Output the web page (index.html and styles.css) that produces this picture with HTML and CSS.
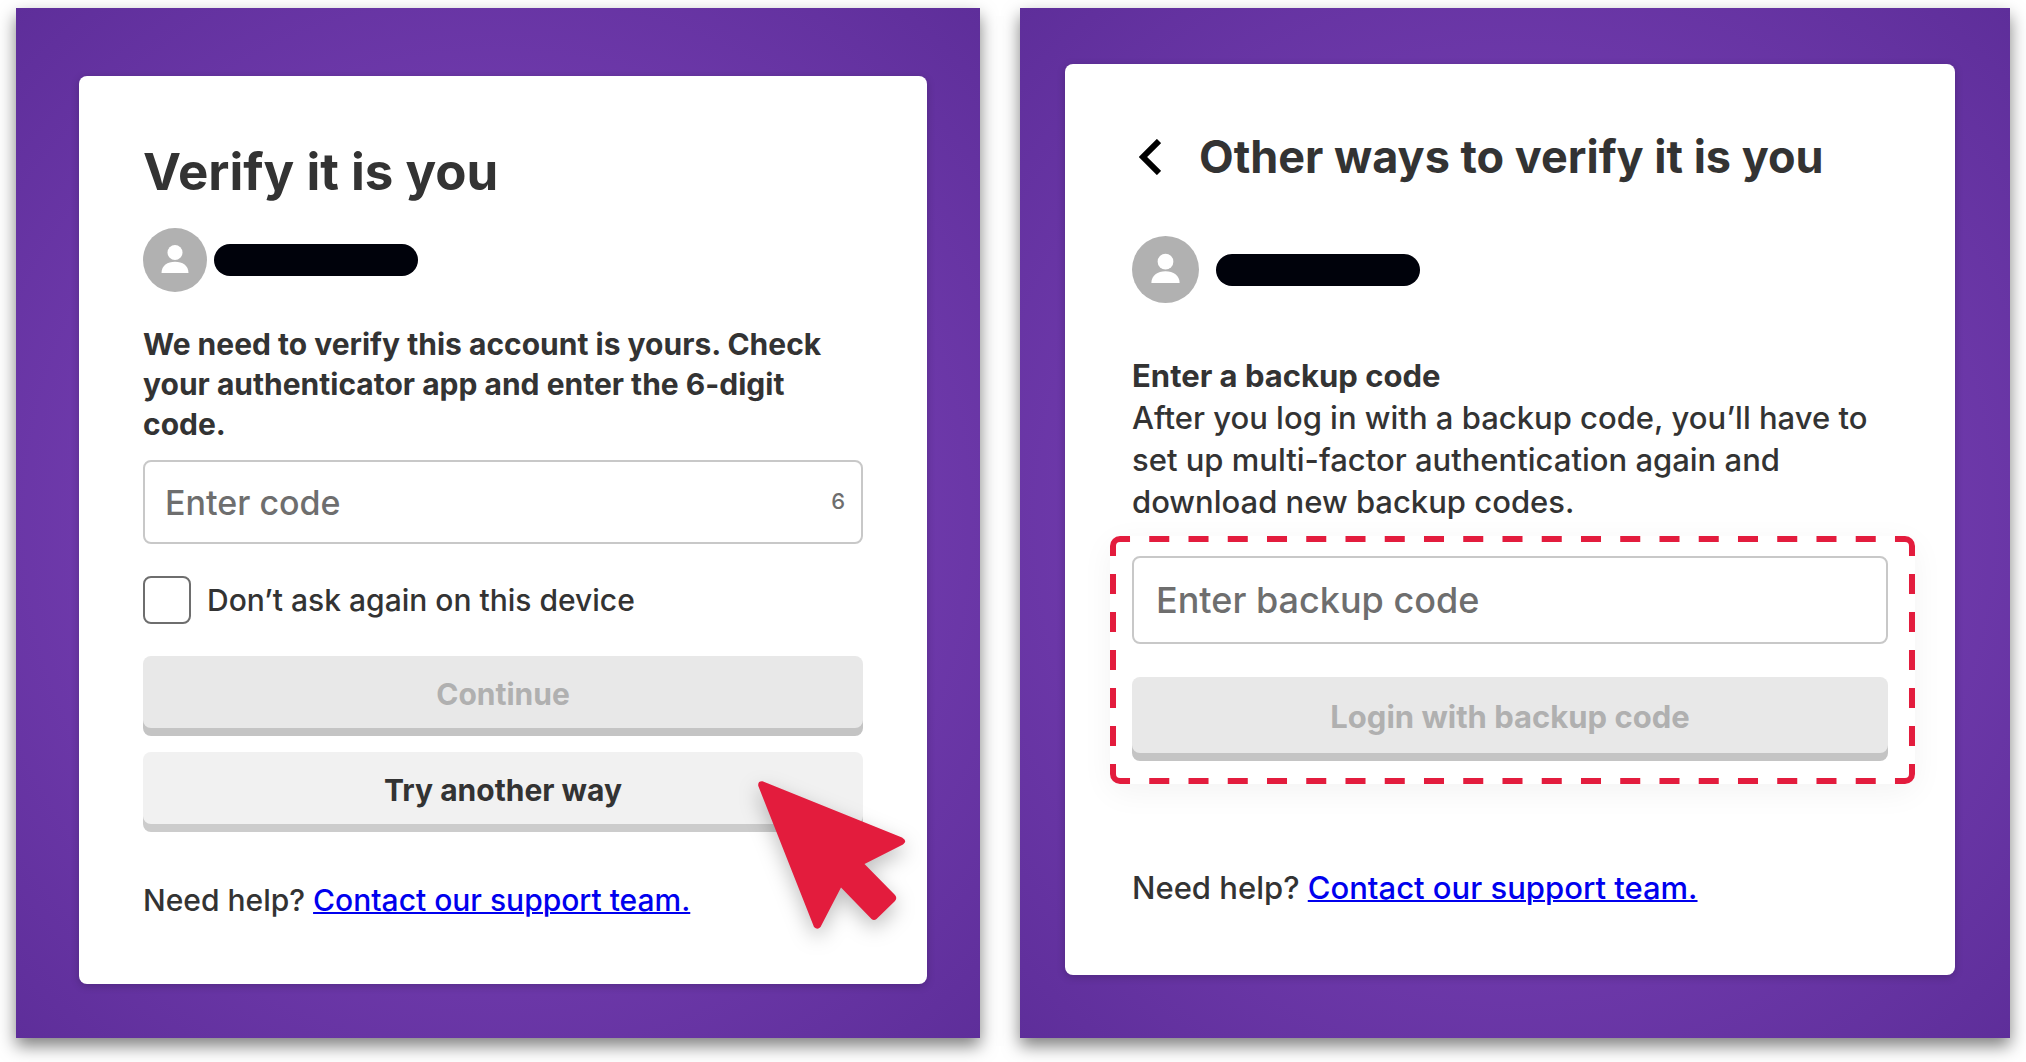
FILE: index.html
```html
<!DOCTYPE html>
<html lang="en">
<head>
    <meta charset="UTF-8">
    <meta name="viewport" content="width=device-width, initial-scale=1.0">
    <title>Verify it is you</title>
    <link rel="stylesheet" href="styles.css">
</head>
<body>
    <main class="screens">
        <section class="panel panel-verify">
            <div class="card">
                <h1>Verify it is you</h1>
                <div class="account">
                    <svg class="avatar" viewBox="0 0 64 64" aria-hidden="true">
                        <circle cx="32" cy="32" r="32" fill="#b1b1b1"/>
                        <circle cx="32" cy="24.500" r="7.500" fill="#fff"/>
                        <path d="M18.500 45C18.500 37.500 24.500 33.700 32 33.700S45.500 37.500 45.500 45Z" fill="#fff"/>
                    </svg>
                    <span class="redacted"></span>
                </div>
                <form>
                    <label class="intro" for="code">We need to verify this account is yours. Check your authenticator app and enter the 6-digit code.</label>
                    <div class="field">
                        <input type="text" id="code" placeholder="Enter code">
                        <span class="counter">6</span>
                    </div>
                    <div class="remember">
                        <input type="checkbox" id="remember">
                        <label for="remember">Don’t ask again on this device</label>
                    </div>
                    <button type="submit" disabled>Continue</button>
                    <button type="button" class="secondary">Try another way</button>
                </form>
                <p class="help">Need help? <a href="#">Contact our support team.</a></p>
                <svg class="cursor" viewBox="0 0 148 149" aria-hidden="true">
                    <path d="M4.500 0.300L144 56.500Q150 60 145 63.500L106.500 83L137 114Q139.500 117 137 120L118.500 138Q116 140 113.500 138L83 106.500L62.500 146Q59.500 149.500 56 146L0.300 5Q-0.500 0 4.500 0.300Z" fill="#e31c3d"/>
                </svg>
            </div>
        </section>

        <section class="panel panel-backup">
            <div class="card">
                <div class="title-row">
                    <button type="button" class="back" aria-label="Back">
                        <svg viewBox="0 0 22 36"><path d="M20 2L4 18L20 34" fill="none" stroke="#000" stroke-width="6"/></svg>
                    </button>
                    <h2>Other ways to verify it is you</h2>
                </div>
                <div class="account">
                    <svg class="avatar" viewBox="0 0 64 64" aria-hidden="true">
                        <circle cx="32" cy="32" r="32" fill="#b1b1b1"/>
                        <circle cx="32" cy="24.500" r="7.500" fill="#fff"/>
                        <path d="M18.500 45C18.500 37.500 24.500 33.700 32 33.700S45.500 37.500 45.500 45Z" fill="#fff"/>
                    </svg>
                    <span class="redacted"></span>
                </div>
                <form>
                    <label class="intro" for="backup">Enter a backup code</label>
                    <p class="note">After you log in with a backup code, you’ll have to set up multi-factor authentication again and download new backup codes.</p>
                    <div class="highlight">
                        <svg class="dashes" viewBox="0 0 804 248" preserveAspectRatio="none" aria-hidden="true">
                            <path d="M3 20V10A7 7 0 0 1 10 3H20M784 3H794A7 7 0 0 1 801 10V20M801 228V238A7 7 0 0 1 794 245H784M20 245H10A7 7 0 0 1 3 238V228"/>
                            <path d="M39.200 3H766M39.200 245H766" stroke-dasharray="20 19.200"/>
                            <path d="M3 38V211M801 38V211" stroke-dasharray="20 18"/>
                        </svg>
                        <input type="text" id="backup" placeholder="Enter backup code">
                        <button type="submit" disabled>Login with backup code</button>
                    </div>
                </form>
                <p class="help">Need help? <a href="#">Contact our support team.</a></p>
            </div>
        </section>
    </main>
</body>
</html>
```

FILE: styles.css
```css
* {
    box-sizing: border-box;
}
body {
    margin: 0;
    background: #fff;
    color: #333;
    font-family: Inter, sans-serif;
    font-size: 30px;
    font-weight: 500;
    line-height: 40px;
}
h1, h2, p {
    margin: 0;
}
h1 {
    font-size: 51px;
    font-weight: 700;
    line-height: 64px;
}
h2 {
    font-size: 45px;
    font-weight: 700;
    line-height: 56px;
}
a {
    color: #0000ee;
    text-decoration-thickness: 2px;
}

/* Two purple panels side by side */
.screens {
    display: grid;
    grid-template-columns: minmax(0, 964fr) minmax(0, 990fr);
    gap: 40px;
    padding: 8px 16px 24px;
}
.panel {
    background: radial-gradient(circle farthest-corner, #8549c2 0%, #5e2e9a 100%);
    box-shadow: 0 8px 16px rgba(0, 0, 0, 0.5);
}
.panel-verify {
    padding: 68px 53px 54px 63px;
}
.panel-backup {
    padding: 56px 55px 63px 45px;
}
.card {
    position: relative;
    padding: 64px;
    background: #fff;
    border-radius: 8px;
    box-shadow: 0 2px 8px rgba(0, 0, 0, 0.2);
}

.account {
    display: flex;
    align-items: center;
    gap: 7px;
    margin: 24px 0 32px;
}
.avatar {
    width: 64px;
    height: 64px;
}
.redacted {
    width: 204px;
    height: 32px;
    background: #00020b;
    border-radius: 16px;
}

.intro {
    display: block;
    font-weight: 700;
}
.field {
    position: relative;
    margin: 16px 0 32px;
}
input[type="text"] {
    display: block;
    width: 100%;
    height: 84px;
    padding: 0 20px;
    border: 2px solid #c8c8c8;
    border-radius: 8px;
    background: #fff;
    font: inherit;
    font-size: 34px;
}
input::placeholder {
    color: #6e6e6e;
    opacity: 1;
}
.counter {
    position: absolute;
    top: 21px;
    right: 18px;
    color: #6e6e6e;
    font-size: 22px;
}
.remember {
    display: flex;
    align-items: center;
    gap: 16px;
    margin-bottom: 32px;
}
.remember input {
    appearance: none;
    width: 48px;
    height: 48px;
    margin: 0;
    border: 2px solid #6e6e6e;
    border-radius: 8px;
}

button {
    display: block;
    width: 100%;
    height: 72px;
    margin: 0 0 24px;
    padding: 4px 0 0;
    border: none;
    border-radius: 8px;
    background: #e8e8e8;
    box-shadow: 0 8px 0 #c4c4c4;
    color: #333;
    font: inherit;
    font-weight: 700;
}
button:disabled {
    color: #b0b0b0;
}
.secondary {
    background: #f1f1f1;
    box-shadow: 0 8px 0 #cccccc;
}
.help {
    margin-top: 56px;
}
.cursor {
    position: absolute;
    right: 21px;
    bottom: 54px;
    width: 148px;
    height: 149px;
    overflow: visible;
    filter: drop-shadow(0 8px 10px rgba(0, 0, 0, 0.25));
}

/* Backup code screen, drawn slightly larger */
.panel-backup .card {
    padding: 65px 67px 66px;
    font-size: 31px;
    line-height: 42px;
}
.title-row {
    display: flex;
    align-items: center;
    gap: 38px;
    padding-left: 7px;
}
.back {
    width: 22px;
    height: 36px;
    margin: 0;
    padding: 0;
    background: none;
    box-shadow: none;
}
.back svg {
    display: block;
}
.panel-backup .account {
    gap: 17px;
    margin: 51px 0 52px;
}
.panel-backup .avatar {
    width: 67px;
    height: 67px;
}
.highlight {
    position: relative;
    margin: 13px -27px 0 -22px;
    padding: 20px 27px 23px 22px;
    border-radius: 10px;
    box-shadow: 0 8px 32px rgba(0, 0, 0, 0.05);
}
.dashes {
    position: absolute;
    inset: 0;
    width: 100%;
    height: 100%;
    fill: none;
    stroke: #e31c3d;
    stroke-width: 6px;
    pointer-events: none;
}
.highlight input[type="text"] {
    height: 88px;
    padding: 0 22px;
    font-size: 36px;
}
.highlight button {
    height: 76px;
    margin: 33px 0 8px;
}
.panel-backup .help {
    margin-top: 83px;
}
```
